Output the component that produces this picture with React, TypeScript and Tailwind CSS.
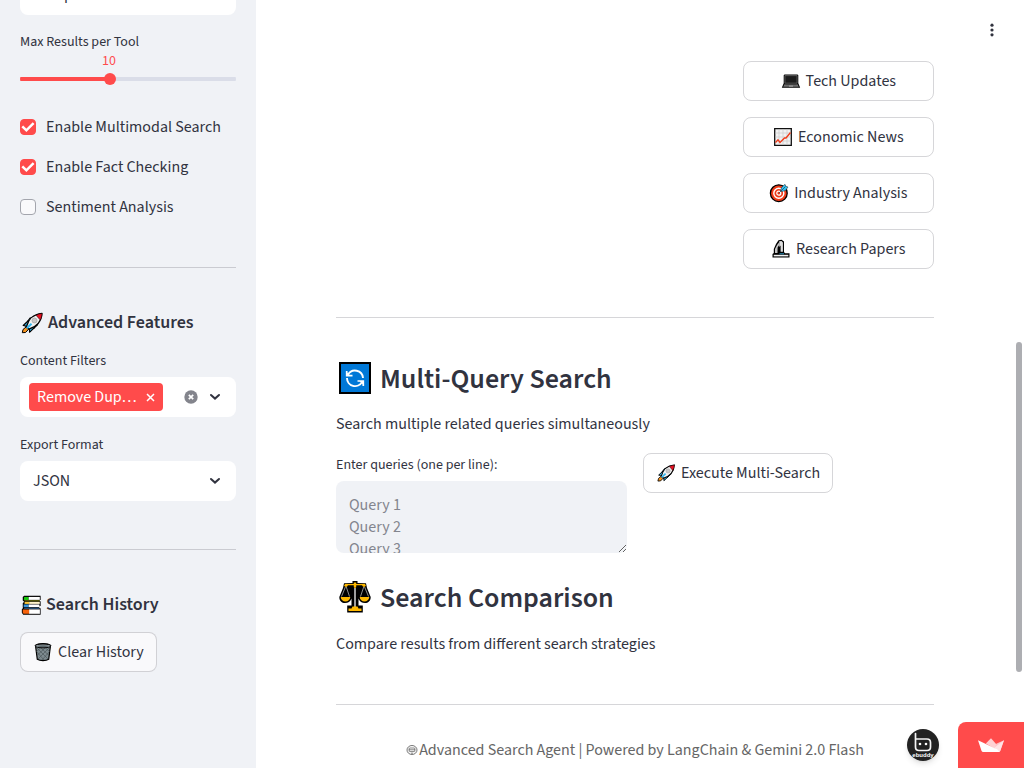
import { useState, type ReactNode } from 'react';

type IconProps = { className?: string };

function Rocket({ className }: IconProps) {
  return (
    <svg viewBox="0 0 24 24" className={className} aria-hidden="true">
      <path d="M7.5 10.5 L10 7 L14 6.5 L9.5 13z M13.5 17.5 L17.5 13.8 L17.8 10.5 L11.5 15.5z" fill="#35b8ee" stroke="#000" strokeWidth="1.1" strokeLinejoin="round" />
      <path d="M8.5 9.5 L3.2 14.5 L5.5 15 L9.5 18.5 L9.5 21.3 L14.5 16.5z" fill="#35b8ee" stroke="#000" strokeWidth="1.1" strokeLinejoin="round" />
      <path d="M6 16 L3 18.5 L2.3 21.7 L5.5 21.5 L8.3 18.6z" fill="#f7941d" stroke="#000" strokeWidth="1" strokeLinejoin="round" />
      <path d="M6.5 15.5 C8 9 13 3 22 2.3 C21.5 10.5 16 16 8.8 18.2z" fill="#f2f2f2" stroke="#000" strokeWidth="1.3" strokeLinejoin="round" />
      <path d="M16 4.2 C18 3.2 20 2.6 22 2.4 C22 4.4 21.4 6.8 20.2 9z" fill="#e81224" stroke="#000" strokeWidth="0.5" />
      <circle cx="14.5" cy="9.5" r="2.5" fill="#c8c8c8" stroke="#999" strokeWidth="0.6" />
      <path d="M6.8 17.3 L11.5 12.7" stroke="#35b8ee" strokeWidth="2" />
    </svg>
  );
}

function Books({ className }: IconProps) {
  return (
    <svg viewBox="0 0 24 24" className={className} aria-hidden="true">
      <path d="M4.5 2 H22.5 V6.5 H21.5 V8 H22.5 V13 H21 V15.5 H22.5 V22.5 H3.5 L2 20.5 V16.5 L3.5 15 H3 V10 L4.5 8.5 L3 7 V3.3z" fill="#000" />
      <path d="M4.5 3.2 H9.5 V6.6 H4.2z" fill="#16c60c" />
      <path d="M9.5 3.2 H21.6 V6.4 H9.5z" fill="#fff" />
      <path d="M4.8 7 H21.3 V8 H4.8z" fill="#8a8d14" />
      <path d="M5 8.6 H10 V10.8 H5z" fill="#ffc83d" />
      <path d="M10 8.6 H21.6 V10.8 H10z" fill="#fff3cc" />
      <path d="M4 11.4 H9.5 V14.3 H4z" fill="#3a96dd" />
      <path d="M9.5 11.4 H21.2 V14.3 H9.5z" fill="#fff" />
      <path d="M4.5 15 H20.8 V16 H4.5z" fill="#3a70a8" />
      <path d="M3 16.8 H10.5 V21.6 H3.8 L3 20.3z" fill="#f7630c" />
      <path d="M10 16.8 H21.7 V21.6 H10z" fill="#fff" />
    </svg>
  );
}

function Trash({ className }: IconProps) {
  return (
    <svg viewBox="0 0 20 20" className={className} aria-hidden="true">
      <path d="M2.5 3.5 C5 1 15 1 17.5 3.5 L15.7 17.3 C13 19 7 19 4.3 17.3z" fill="#7d8a8f" stroke="#000" strokeWidth="1.2" />
      <path d="M4 6 L15 17 M3.5 9.5 L11 18 M8 6 L16 13.5 M12.5 6 L16.5 9.5 M16 6 L5 17 M16.5 9.5 L9 18 M12 6 L4 13.5 M7.5 6 L3.5 9.5" stroke="#444f53" strokeWidth="0.6" />
      <ellipse cx="10" cy="3.9" rx="8" ry="1.9" fill="#9aa5a9" stroke="#000" strokeWidth="1" />
      <ellipse cx="10" cy="4.1" rx="6" ry="0.8" fill="#59656a" />
    </svg>
  );
}

function Laptop({ className }: IconProps) {
  return (
    <svg viewBox="0 0 20 20" className={className} aria-hidden="true">
      <path d="M3.5 3.5 H16.5 L17.3 4.3 V12.3 L19.2 16.8 H0.8 L2.7 12.3 V4.3z" fill="#000" />
      <path d="M3.9 4.6 H16.1 V12.2 H3.9z" fill="#1c1c1c" stroke="#777" strokeWidth="0.7" />
      <path d="M3.5 13.2 H16.5 L17.8 15.8 H2.2z" fill="#767676" />
      <path d="M4.3 13.7 H15.7" stroke="#333" strokeWidth="0.8" />
      <path d="M8 15.1 H12" stroke="#bbb" strokeWidth="0.8" />
    </svg>
  );
}

function Chart({ className }: IconProps) {
  return (
    <svg viewBox="0 0 20 20" className={className} aria-hidden="true">
      <path d="M1.7 1.7 H18.3 V18.3 H1.7z" fill="#f2f2f2" stroke="#111" strokeWidth="1.3" />
      <path d="M6 2.4 V17.6 M10 2.4 V17.6 M14 2.4 V17.6 M2.4 6 H17.6 M2.4 10 H17.6 M2.4 14 H17.6" stroke="#ccc" strokeWidth="0.7" />
      <path d="M2.5 15.5 L5 12.8 L7 15.5 L11.5 11 L13 11 L17.5 5.5" fill="none" stroke="#f03a17" strokeWidth="1.3" />
    </svg>
  );
}

function Target({ className }: IconProps) {
  return (
    <svg viewBox="0 0 20 20" className={className} aria-hidden="true">
      <circle cx="9.8" cy="10.2" r="8.4" fill="#f03a17" stroke="#000" strokeWidth="1.3" />
      <circle cx="9.8" cy="10.2" r="5" fill="#f03a17" stroke="#fff" strokeWidth="1.4" />
      <circle cx="9.8" cy="10.2" r="2" fill="#f03a17" stroke="#fff" strokeWidth="1.2" />
      <path d="M11.5 8 L12.5 4.5 L16 1.3 L16.8 3.2 L19 4 L16.5 7.5 L13 8.5z" fill="#35c1f1" stroke="#222" strokeWidth="0.5" />
      <path d="M9.8 10.2 L16.5 3.5" stroke="#18536b" strokeWidth="0.8" />
    </svg>
  );
}

function Microscope({ className }: IconProps) {
  return (
    <svg viewBox="0 0 20 20" className={className} aria-hidden="true">
      <path d="M7.5 1.3 L10.5 0.8 L13 2.5 V13 L14 14.2 H18.5 V18.5 H1.5 V15 L2.8 14 V10 L5 5z" fill="#000" />
      <path d="M8.2 2.3 L10.5 2 L11.9 3.6 V12.8 H9.6 V6.5 L8.3 8z" fill="#dedede" />
      <path d="M6.2 5.8 L8 3.5 L8.5 5.5 L6.6 8.5 L6.5 14 H4 V10z" fill="#c4c4c4" />
      <path d="M2.7 15.8 H17.3 V17.4 H2.7z" fill="#eee" />
      <path d="M8.5 14.8 H13" stroke="#35b8ee" strokeWidth="0.8" />
    </svg>
  );
}

function Refresh({ className }: IconProps) {
  return (
    <svg viewBox="0 0 32 32" className={className} aria-hidden="true">
      <path d="M1 1 H31 V31 H1z" fill="#0078d7" stroke="#000" strokeWidth="2" />
      <path d="M9 12.8 A8 8 0 0 1 24 16" fill="none" stroke="#fff" strokeWidth="1.9" />
      <path d="M7.7 9 V13.6 H13.5" fill="none" stroke="#fff" strokeWidth="1.7" />
      <path d="M7.7 10 V13.6 H11z M24.3 23 V19 H20.5z" fill="#fff" />
      <path d="M8 16 A8 8 0 0 0 23 20" fill="none" stroke="#fff" strokeWidth="1.9" />
      <path d="M24.3 24 V19 H18.5" fill="none" stroke="#fff" strokeWidth="1.7" />
    </svg>
  );
}

function Scales({ className }: IconProps) {
  return (
    <svg viewBox="0 0 32 32" className={className} aria-hidden="true">
      <path d="M13.5 0 H18.5 V2 L27 2.2 L28 7 L31.7 16 C31.7 20 29 22 26 22 C23 22 20.5 20.5 19.5 17.5 V24.5 H23.8 V31.5 H8.2 V24.5 H12.5 V17.5 C11.5 20.5 9 22 6 22 C3 22 0.3 20 0.3 16 L4 7 L5 2.2 L13.5 2z" fill="#000" />
      <path d="M6.5 3.6 H25.5" stroke="#ffb900" strokeWidth="1.3" />
      <path d="M14.8 1.5 H17.2 V6 L16 7.5 L14.8 6z" fill="#ffb900" />
      <circle cx="7" cy="4.3" r="1.6" fill="#ffb900" />
      <circle cx="25" cy="4.3" r="1.6" fill="#ffb900" />
      <path d="M15 7 H17 V26 H15z" fill="#9e9e9e" />
      <path d="M6.4 6 L2.5 15.5 M7.3 6 L10.5 15.5 M24.7 6 L21.5 15.5 M25.6 6 L29.5 15.5" stroke="#b0b0b0" strokeWidth="0.8" />
      <path d="M1.7 16 H11.3 C11 19 9 20.4 6.5 20.4 C4 20.4 2 19 1.7 16z M20.7 16 H30.3 C30 19 28 20.4 25.5 20.4 C23 20.4 21 19 20.7 16z" fill="#ffb900" />
      <path d="M13.5 25.5 H18.5 L19.5 27.5 H22.5 V30 H9.5 V27.5 H12.5z" fill="#ffb900" />
    </svg>
  );
}

function Globe({ className }: IconProps) {
  return (
    <svg viewBox="0 0 12 12" className={className} aria-hidden="true">
      <ellipse cx="6" cy="6" rx="5" ry="4.5" fill="none" stroke="#666" strokeWidth="0.9" />
      <path d="M3.5 4 H8.5 M2.7 5.8 H9.3 M3.5 7.6 H8.5 M3.2 4 V7.6 M8.8 4 V7.6 M5 9.2 H7" stroke="#666" strokeWidth="0.8" fill="none" />
    </svg>
  );
}

function Chevron({ className }: IconProps) {
  return (
    <svg viewBox="0 0 12 8" className={className} aria-hidden="true">
      <path d="M2 2 L6 5.6 L10 2" fill="none" stroke="#31333f" strokeWidth="2" strokeLinecap="round" />
    </svg>
  );
}

function SidebarHeading({ icon, children }: { icon: ReactNode; children: ReactNode }) {
  return (
    <h3 className="flex h-6 items-center gap-1 text-[18px] font-semibold leading-6">
      {icon}
      {children}
    </h3>
  );
}

function ActionButton({ icon, children, className = '' }: { icon: ReactNode; children: ReactNode; className?: string }) {
  return (
    <button
      type="button"
      className={`flex h-10 items-center justify-center gap-[5px] rounded-lg border border-[#31333f]/20 px-3 ${className}`}
    >
      {icon}
      <span>{children}</span>
    </button>
  );
}

function Checkbox({ label, initial }: { label: string; initial: boolean }) {
  const [checked, setChecked] = useState(initial);
  return (
    <label className="flex h-6 items-center gap-2.5">
      <span className="grid size-4 place-items-center">
        <input
          type="checkbox"
          checked={checked}
          onChange={(e) => setChecked(e.target.checked)}
          className="col-start-1 row-start-1 size-4 appearance-none rounded border border-[#a3a5ad] bg-[#f9f9fb] checked:border-[#ff4b4b] checked:bg-[#ff4b4b]"
        />
        {checked && (
          <svg viewBox="0 0 16 16" className="pointer-events-none col-start-1 row-start-1 size-4" aria-hidden="true">
            <path d="M2.3 7.3 L6.4 11.3 L13.6 4.2" fill="none" stroke="#fff" strokeWidth="2.5" />
          </svg>
        )}
      </span>
      {label}
    </label>
  );
}

function ResultsSlider() {
  const [value, setValue] = useState(10);
  const min = 3;
  const max = 20;
  const percent = ((value - min) / (max - min)) * 100;
  return (
    <div className="mt-[17px]">
      <label htmlFor="max-results" className="block text-[14px] leading-5">
        Max Results per Tool
      </label>
      <div className="relative h-[21px]">
        <output
          htmlFor="max-results"
          className="absolute bottom-0.5 -translate-x-1/2 text-[14px] leading-5 text-[#ff4b4b]"
          style={{ left: `${percent}%` }}
        >
          {value}
        </output>
      </div>
      <input
        id="max-results"
        type="range"
        min={min}
        max={max}
        value={value}
        onChange={(e) => setValue(Number(e.target.value))}
        className="block h-3 w-full appearance-none rounded-full bg-[length:100%_4px] bg-center bg-no-repeat [&::-webkit-slider-thumb]:size-3 [&::-webkit-slider-thumb]:appearance-none [&::-webkit-slider-thumb]:rounded-full [&::-webkit-slider-thumb]:bg-[#ff4b4b]"
        style={{ backgroundImage: `linear-gradient(to right, #ff4b4b ${percent}%, #dadde8 ${percent}%)` }}
      />
    </div>
  );
}

function Sidebar() {
  return (
    <aside className="w-64 shrink-0 overflow-hidden bg-[#f0f2f6] px-5">
      <div className="-mt-[25px]">
        <select aria-label="Search mode" className="block h-10 w-full appearance-none rounded-lg bg-white px-[13px]">
          <option>Comprehensive</option>
        </select>
      </div>
      <ResultsSlider />
      <div className="mt-[30px] flex flex-col gap-4">
        <Checkbox label="Enable Multimodal Search" initial />
        <Checkbox label="Enable Fact Checking" initial />
        <Checkbox label="Sentiment Analysis" initial={false} />
      </div>

      <hr className="mb-[43px] mt-12 border-[#31333f]/20" />

      <SidebarHeading icon={<Rocket className="size-6" />}>Advanced Features</SidebarHeading>
      <label htmlFor="filters" className="mt-4 block text-[14px] leading-5">
        Content Filters
      </label>
      <div className="mt-1.5 flex h-10 items-center rounded-lg bg-white pl-[9px] pr-[15px]">
        <span className="flex h-7 shrink-0 items-center gap-2 rounded bg-[#ff4b4b] px-2 text-white">
          <span className="w-[101px] whitespace-nowrap">Remove Dup…</span>
          <button type="button" aria-label="Remove filter">
            <svg viewBox="0 0 9 9" className="size-[9px]" aria-hidden="true">
              <path d="M1 1 L8 8 M8 1 L1 8" stroke="#fff" strokeWidth="1.5" />
            </svg>
          </button>
        </span>
        <input id="filters" className="w-0 min-w-0 flex-1 bg-transparent outline-none" />
        <button type="button" aria-label="Clear all" className="mr-[11px]">
          <svg viewBox="0 0 14 14" className="size-3.5" aria-hidden="true">
            <circle cx="7" cy="7" r="6.7" fill="#83848c" />
            <path d="M4.8 4.8 L9.2 9.2 M9.2 4.8 L4.8 9.2" stroke="#fff" strokeWidth="1.7" />
          </svg>
        </button>
        <button type="button" aria-label="Open filters">
          <Chevron className="h-2 w-3" />
        </button>
      </div>

      <label htmlFor="export" className="mt-[18px] block text-[14px] leading-5">
        Export Format
      </label>
      <div className="mt-1.5 grid items-center">
        <select id="export" className="col-start-1 row-start-1 h-10 w-full appearance-none rounded-lg bg-white px-[13px]">
          <option>JSON</option>
        </select>
        <Chevron className="pointer-events-none col-start-1 row-start-1 mr-[15px] h-2 w-3 justify-self-end" />
      </div>

      <hr className="mb-[43px] mt-12 border-[#31333f]/20" />

      <SidebarHeading icon={<Books className="size-[22px]" />}>Search History</SidebarHeading>
      <ActionButton className="mt-[15px] bg-[#f9f9fb]" icon={<Trash className="size-5" />}>
        Clear History
      </ActionButton>
    </aside>
  );
}

function SectionHeading({ icon, children }: { icon: ReactNode; children: ReactNode }) {
  return (
    <h2 className="flex h-[34px] items-start gap-[9px] pl-[3px] text-[28px] font-semibold leading-[34px]">
      {icon}
      {children}
    </h2>
  );
}

export default function App() {
  return (
    <div className="relative flex h-screen overflow-hidden bg-white font-['Source_Sans_3','Noto_Sans_CJK_SC',sans-serif] text-[16px] leading-6 text-[#31333f]">
      <Sidebar />

      <main className="min-w-0 flex-1 overflow-hidden px-20 pt-[61px]">
        <div className="flex gap-4">
          <div className="flex-[1_1_calc(66.66%_-_16px)]" />
          <div className="flex flex-[1_1_calc(33.33%_-_16px)] flex-col gap-4">
            <ActionButton icon={<Laptop className="size-5" />}>Tech Updates</ActionButton>
            <ActionButton icon={<Chart className="size-5" />}>Economic News</ActionButton>
            <ActionButton icon={<Target className="size-5" />}>Industry Analysis</ActionButton>
            <ActionButton icon={<Microscope className="size-5" />}>Research Papers</ActionButton>
          </div>
        </div>

        <hr className="mb-11 mt-12 border-[#31333f]/20" />

        <SectionHeading icon={<Refresh className="size-8" />}>Multi-Query Search</SectionHeading>
        <p className="mt-4">Search multiple related queries simultaneously</p>

        <div className="mt-[17px] grid grid-cols-2 items-start gap-4">
          <div>
            <label htmlFor="queries" className="block pt-0.5 text-[14px] leading-5">
              Enter queries (one per line):
            </label>
            <textarea
              id="queries"
              placeholder={'Query 1\nQuery 2\nQuery 3'}
              className="mt-1.5 block h-[72px] w-full resize-y rounded-lg bg-[#f0f2f6] px-[13px] pt-[13px] leading-[22px] placeholder:text-[#83858e]"
            />
          </div>
          <ActionButton className="justify-self-start" icon={<Rocket className="size-5" />}>
            Execute Multi-Search
          </ActionButton>
        </div>

        <div className="mt-7">
          <SectionHeading icon={<Scales className="size-8" />}>Search Comparison</SectionHeading>
        </div>
        <p className="mt-[17px]">Compare results from different search strategies</p>

        <hr className="mb-[33px] mt-12 border-[#31333f]/20" />

        <footer className="flex items-center justify-center text-[#666]">
          <Globe className="mr-px size-3" />
          <span>Advanced Search Agent | Powered by LangChain &amp; Gemini 2.0 Flash</span>
        </footer>
      </main>

      <div className="flex w-2.5 shrink-0 flex-col items-center" aria-hidden="true">
        <div className="mt-[342px] h-[330px] w-1.5 rounded-full bg-[#adaeb2]" />
      </div>

      <button type="button" aria-label="Menu" className="absolute right-6 top-[22px]">
        <svg viewBox="0 0 16 16" className="size-4" fill="#31333f" aria-hidden="true">
          <circle cx="8" cy="3.2" r="1.6" />
          <circle cx="8" cy="8" r="1.6" />
          <circle cx="8" cy="12.8" r="1.6" />
        </svg>
      </button>

      <a href="#profile" aria-label="Creator profile" className="absolute bottom-[7px] right-[85px] rounded-full shadow-md">
        <svg viewBox="0 0 32 32" className="size-8" aria-hidden="true">
          <circle cx="16" cy="16" r="16" fill="#222" />
          <path d="M8.5 4.5 V18 Q8.5 21.5 12 21.5 H20 Q23.5 21.5 23.5 18 V13.5 Q23.5 10 20 10 H8.5" fill="none" stroke="#f4f4f4" strokeWidth="1.7" strokeLinecap="round" />
          <circle cx="13" cy="15" r="1.3" fill="#fff" />
          <circle cx="19" cy="15" r="1.3" fill="#fff" />
          <text x="16" y="27.5" textAnchor="middle" fontSize="6" fontWeight="700" fill="#fff" fontFamily="Liberation Sans, sans-serif">
            ebuddy
          </text>
        </svg>
      </a>

      <a
        href="#streamlit"
        aria-label="Hosted with Streamlit"
        className="absolute bottom-0 right-0 flex h-[46px] w-[66px] items-center justify-center rounded-tl-lg bg-[#ff4b4b]"
      >
        <svg viewBox="0 0 28 16" className="h-4 w-7" aria-hidden="true">
          <path d="M14 1.2 L8.8 6.6 L20 13 L23 14.5 L19.5 7.5z" fill="#ffd0d3" />
          <path d="M27 3.3 L19.3 6.8 L17.5 11 L21.5 15 Q22.8 15 23.2 14z" fill="#ffc3c7" />
          <path d="M27 3.3 L17.5 10.5 L20.5 15 Q22.8 15.2 23.2 14z" fill="#ffe3e5" />
          <path d="M1 3.3 L20.5 12.6 L22.5 15 H6.2 Q5 15 4.6 14z" fill="#fff" />
        </svg>
      </a>
    </div>
  );
}
